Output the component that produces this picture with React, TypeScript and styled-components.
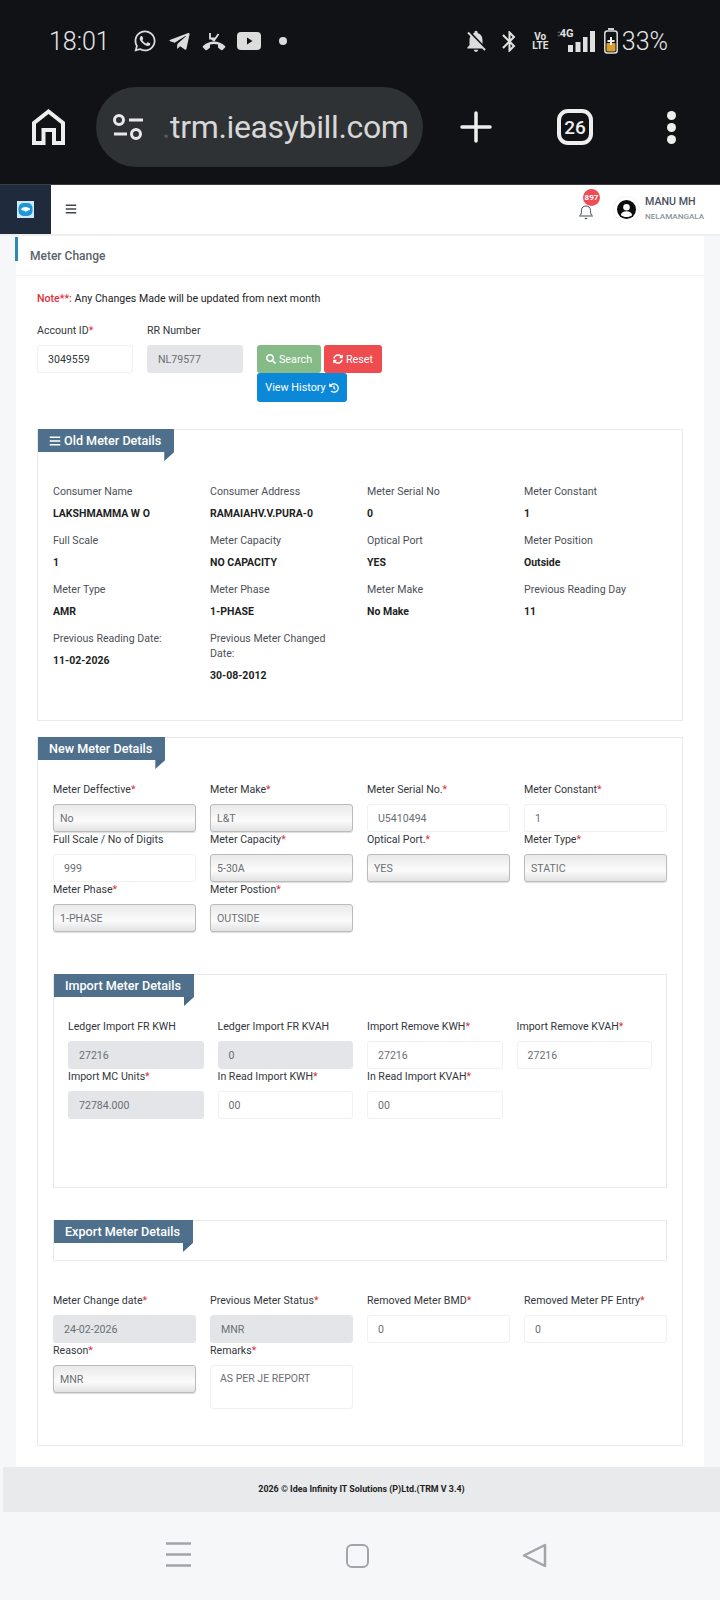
import React from "react";
import styled, { createGlobalStyle } from "styled-components";
import { FaWhatsapp, FaTelegramPlane, FaSearch, FaSyncAlt, FaHistory, FaBars } from "react-icons/fa";
import { MdNotificationsOff, MdBluetooth } from "react-icons/md";

const Global = createGlobalStyle`
  html, body { margin: 0; padding: 0; background: #f6f7f9; }
  * { box-sizing: border-box; }
  body { font-family: Roboto, "Liberation Sans", sans-serif; }
`;

const Page = styled.div`
  width: 720px;
  height: 1600px;
  overflow: hidden;
  background: #f6f7f9;
  display: flex;
  flex-direction: column;
`;

/* phone chrome */
const SystemBar = styled.div`
  height: 185px;
  background: #101215;
  color: #e6e6e6;
  display: flex;
  flex-direction: column;
  border-bottom: 1px solid #3a3d41;
  flex: none;
`;
const StatusRow = styled.div`
  height: 87px;
  padding: 0 52px 5px 49px;
  display: flex;
  align-items: center;
  justify-content: space-between;
`;
const StatusGroup = styled.div`
  display: flex;
  align-items: center;
`;
const Clock = styled.span`
  font-size: 25px;
  font-weight: 300;
  width: 84px;
`;
const AppIcons = styled.div`
  display: flex;
  align-items: center;
  gap: 11px;
  color: #dcdcdc;
`;
const Dot = styled.span`
  width: 8px;
  height: 8px;
  border-radius: 50%;
  background: #dcdcdc;
  margin-left: 7px;
`;
const BellOff = styled(MdNotificationsOff)`
  margin-right: 8px;
  color: #dcdcdc;
`;
const Bluetooth = styled(MdBluetooth)`
  margin-right: -3px;
  color: #e0e0e0;
`;
const VoLte = styled.span`
  font-size: 10px;
  line-height: 9px;
  font-weight: 700;
  text-align: center;
  width: 17px;
  color: #e0e0e0;
  margin: 0 8px 0 13px;
`;
const Signal = styled.div`
  position: relative;
  width: 39px;
  height: 22px;
  margin-right: 8px;
`;
const FourG = styled.span`
  position: absolute;
  left: 3px;
  top: -3px;
  font-size: 11px;
  font-weight: 700;
  color: #e0e0e0;
`;
const Percent = styled.span`
  font-size: 25px;
  font-weight: 300;
  margin-left: 4px;
`;
const BrowserRow = styled.div`
  display: flex;
  align-items: center;
  height: 80px;
  padding-left: 32px;
`;
const UrlPill = styled.div`
  width: 327px;
  height: 80px;
  margin-left: 31px;
  border-radius: 40px;
  background: #2f3235;
  display: flex;
  align-items: center;
  padding-left: 17px;
  flex: none;
`;
const UrlText = styled.span`
  margin-left: 19px;
  font-size: 32px;
  letter-spacing: -0.35px;
  color: #d8d8d8;
  white-space: nowrap;
`;
const FadeChar = styled.span`
  color: #55585b;
`;
const PlusWrap = styled.div`
  margin-left: 37px;
  display: flex;
`;
const TabCount = styled.div`
  width: 36px;
  height: 36px;
  border: 4px solid #eee;
  border-radius: 11px;
  margin-left: 65px;
  display: flex;
  align-items: center;
  justify-content: center;
  font-size: 19px;
  font-weight: 500;
  color: #eee;
`;
const MenuDots = styled.div`
  margin-left: 74px;
  display: flex;
  flex-direction: column;
  gap: 3px;
`;
const MenuDot = styled.span`
  width: 9px;
  height: 9px;
  border-radius: 50%;
  background: #eee;
`;

/* app header */
const AppHeader = styled.header`
  height: 51px;
  background: #fff;
  display: flex;
  align-items: stretch;
  border-bottom: 2px solid #eceef0;
  flex: none;
`;
const LogoBlock = styled.div`
  width: 51px;
  background: #1f2a3c;
  display: flex;
  align-items: center;
  justify-content: center;
`;
const MenuToggle = styled.div`
  margin-left: 14px;
  display: flex;
  align-items: center;
  padding-bottom: 2px;
  color: #3f4650;
  font-size: 12px;
`;
const HeaderRight = styled.div`
  margin-left: auto;
  display: flex;
  align-items: center;
  padding-right: 16px;
`;
const BellWrap = styled.div`
  position: relative;
  width: 16px;
  height: 17px;
  margin: 3px 20px 0 0;
  color: #444b55;
`;
const Badge = styled.span`
  position: absolute;
  left: 5px;
  top: -14px;
  width: 17px;
  height: 17px;
  border-radius: 50%;
  background: #ef4d55;
  color: #fff;
  font-size: 8px;
  font-weight: 700;
  display: flex;
  align-items: center;
  justify-content: center;
`;
const Avatar = styled.div`
  width: 25px;
  height: 25px;
  border-radius: 50%;
  background: #fff;
  box-shadow: 0 0 2px #ddd;
  display: flex;
  align-items: center;
  justify-content: center;
  margin-right: 6px;
`;
const UserBlock = styled.div`
  display: flex;
  flex-direction: column;
  gap: 2px;
  width: 59px;
  margin-bottom: 4px;
`;
const UserName = styled.span`
  font-size: 10.7px;
  line-height: 14px;
  font-weight: 500;
  color: #4a515c;
  white-space: nowrap;
`;
const UserPlace = styled.span`
  font-size: 8.1px;
  line-height: 10px;
  font-weight: 500;
  color: #8c94a0;
  white-space: nowrap;
`;

/* page card */
const Card = styled.main`
  margin: 0 16px;
  background: #fff;
  flex: none;
`;
const TitleBar = styled.div`
  position: relative;
  height: 40px;
  padding: 12px 0 0 14px;
  border-bottom: 1px solid #f1f2f4;
  font-size: 12px;
  line-height: 16px;
  font-weight: 500;
  color: #5a626c;
  &::before {
    content: "";
    position: absolute;
    left: -1px;
    top: 1px;
    width: 3px;
    height: 24px;
    background: #2d8ab5;
  }
`;
const CardBody = styled.div`
  padding: 16px 21px 21px;
`;
const Note = styled.p`
  margin: 0 0 18px;
  font-size: 10.6px;
  line-height: 14px;
  color: #222;
`;
const NoteMark = styled.span`
  color: #e0313b;
  font-weight: 500;
`;
const SearchRow = styled.div`
  display: flex;
  align-items: flex-start;
  margin-bottom: 27px;
`;
const SearchField = styled.div`
  width: 96px;
  margin-right: 14px;
`;
const ButtonArea = styled.div`
  margin-top: 21px;
  width: 135px;
  display: flex;
  flex-wrap: wrap;
  column-gap: 3px;
`;
const Button = styled.div<{ $bg: string; $w: number }>`
  width: ${(p) => p.$w}px;
  height: ${(p) => (p.$w === 90 ? 29 : 28)}px;
  background: ${(p) => p.$bg};
  color: #fff;
  border-radius: 3px;
  font-size: 10.8px;
  font-weight: 400;
  display: flex;
  align-items: center;
  justify-content: center;
  gap: 3px;
  white-space: nowrap;
`;

const Panel = styled.section<{ $pad: string; $mb?: number; $mt?: number }>`
  border: 1px solid #e9eaec;
  background: #fff;
  padding: ${(p) => p.$pad};
  margin-top: ${(p) => p.$mt ?? 0}px;
  margin-bottom: ${(p) => p.$mb ?? 0}px;
`;
const Ribbon = styled.div`
  position: relative;
  display: inline-flex;
  align-items: center;
  gap: 3px;
  height: 23px;
  margin: -1px 0 0 0;
  padding: 0 13px 0 11px;
  background: #4f708c;
  color: #fff;
  font-size: 12.6px;
  font-weight: 500;
  white-space: nowrap;
  vertical-align: top;
  &::after {
    content: "";
    position: absolute;
    right: 0;
    top: 100%;
    width: 10px;
    height: 9px;
    background: #466a88;
    clip-path: polygon(0 0, 100% 0, 0 100%);
  }
`;
const RibbonRow = styled.div<{ $inset: number }>`
  margin-left: -${(p) => p.$inset}px;
  height: 22px;
`;
const DetailGrid = styled.div`
  margin-top: 32px;
  display: grid;
  grid-template-columns: repeat(4, 143px);
  column-gap: 14px;
`;
const Detail = styled.div`
  padding: 0 12px 12px 0;
`;
const DetailLabel = styled.div`
  font-size: 10.6px;
  line-height: 15px;
  color: #4c5057;
  margin-bottom: 8px;
`;
const DetailValue = styled.div`
  font-size: 10.5px;
  line-height: 14px;
  font-weight: 700;
  color: #1d1f22;
`;
const FieldGrid = styled.div<{ $col: number; $top?: number }>`
  margin-top: ${(p) => p.$top ?? 0}px;
  display: grid;
  grid-template-columns: repeat(4, ${(p) => p.$col}px);
  column-gap: 14px;
  row-gap: 1px;
  align-items: start;
`;
const Field = styled.div``;
const FieldLabel = styled.div`
  font-size: 10.6px;
  line-height: 14px;
  color: #33373d;
  margin-bottom: 7px;
  white-space: nowrap;
`;
const Req = styled.span`
  color: #e0313b;
`;
const controlBg = {
  input: "background: #fff; border: 1px solid #eef0f2; padding-left: 10px;",
  disabled: "background: #e3e5e8; border: 1px solid #e3e5e8; padding-left: 10px;",
  select:
    "background: linear-gradient(#e9e9e9, #f7f7f7 45%, #fbfbfb 60%, #e2e2e2); border: 1px solid #b9bcbf; padding-left: 6px; box-shadow: 0 1px 1px #ddd;",
};
type Kind = keyof typeof controlBg;
const Control = styled.div<{ $kind: Kind; $strong?: boolean }>`
  height: 28px;
  border-radius: 3px;
  display: flex;
  align-items: center;
  font-size: 10.6px;
  color: ${(p) => (p.$strong ? "#33373d" : "#6b6f75")};
  ${(p) => controlBg[p.$kind]}
`;
const TextArea = styled.div`
  height: 44px;
  border: 1px solid #eef0f2;
  border-radius: 3px;
  padding: 6px 0 0 9px;
  font-size: 10.5px;
  line-height: 14px;
  color: #6b6f75;
`;

/* footer */
const Footer = styled.footer`
  height: 45px;
  margin-left: 3px;
  background: #e9eaeb;
  display: flex;
  align-items: center;
  justify-content: center;
  padding-bottom: 1px;
  font-size: 8.9px;
  font-weight: 700;
  color: #222;
  flex: none;
`;
const NavBar = styled.nav`
  display: flex;
  align-items: flex-start;
  padding: 30px 0 0 166px;
  color: #a2a4a8;
`;
const NavSquare = styled.div`
  width: 23px;
  height: 24px;
  margin: 2px 0 0 155px;
  border: 2.5px solid #a2a4a8;
  border-radius: 6px;
`;
const NavBack = styled.div`
  margin: 1px 0 0 153px;
  display: flex;
`;

/* drawings */
const HomeIcon = () => (
  <svg width="33" height="36" viewBox="0 0 33 36" fill="none" stroke="#eee" strokeWidth="4">
    <path d="M2 34V14L16.5 2.5 31 14v20h-9V21H11.5v13H2z" strokeLinejoin="miter" />
  </svg>
);
const TuneIcon = () => (
  <svg width="30" height="26" viewBox="0 0 30 26" fill="none" stroke="#e8e8e8" strokeWidth="3">
    <circle cx="6" cy="6" r="4.5" />
    <path d="M16 6h14M1 20h13" />
    <circle cx="23" cy="20" r="4.5" />
  </svg>
);
const PlusIcon = () => (
  <svg width="32" height="32" viewBox="0 0 32 32" stroke="#eee" strokeWidth="3.5" strokeLinecap="round">
    <path d="M16 2v28M2 16h28" />
  </svg>
);
const MissedCall = () => (
  <svg width="24" height="19" viewBox="0 0 24 19" fill="#dcdcdc">
    <path d="M12 9.5c-4 0-8 1.600-11 4.500-.5.5-.5 1 0 1.500l2.500 2.500c.4.4 1 .4 1.400.1l2.600-2c.3-.2.5-.5.5-.9v-2.600c1.300-.4 2.700-.6 4-.6s2.700.2 4 .6v2.600c0 .4.2.7.5.9l2.600 2c.4.3 1 .3 1.400-.1l2.500-2.500c.5-.5.5-1 0-1.500-3-2.900-7-4.500-11-4.500z" />
    <path d="M8 1v5.500h5.500M8.500 6l3.500 2.500L16.500 2" fill="none" stroke="#dcdcdc" strokeWidth="1.800" />
  </svg>
);
const YoutubeIcon = () => (
  <svg width="24" height="18" viewBox="0 0 24 18">
    <rect width="24" height="18" rx="4" fill="#dcdcdc" />
    <path d="M10 5.500l5.500 3.500-5.500 3.500z" fill="#101215" />
  </svg>
);
const SignalBars = () => (
  <svg width="39" height="22" viewBox="0 0 39 22" fill="#e0e0e0">
    <path d="M0 3l2-2 2 2zM0 5l2 2 2-2z" fill="#555" />
    <rect x="11" y="15" width="5" height="7" />
    <rect x="18.500" y="12" width="5" height="10" />
    <rect x="26" y="7" width="4.500" height="15" />
    <rect x="33" y="1" width="5" height="21" />
  </svg>
);
const Battery = () => (
  <svg width="14" height="26" viewBox="0 0 14 26">
    <rect x="4" y="0" width="6" height="2" fill="#ccc" />
    <rect x="0.800" y="3" width="12.400" height="22" rx="2.500" fill="none" stroke="#ddd" strokeWidth="1.500" />
    <rect x="2.500" y="15" width="9" height="8.500" rx="1" fill="#d9a02b" />
    <path d="M7 9v8M3.500 13h7" stroke="#eee" strokeWidth="2" />
  </svg>
);
const LogoIcon = () => (
  <svg width="17" height="17" viewBox="0 0 17 17">
    <rect width="17" height="17" fill="#cfe9f6" />
    <rect x="1.500" y="2" width="14" height="13" rx="5" fill="#1f96d6" />
    <path d="M4 8.500c1-2.500 5-3 6.500-2 1.500 0 3 1 2.500 2.500-1 .5-2 0-3 1-1 1.500-2.500 0-3-.5-1 0-2 0-3-1z" fill="#fff" />
  </svg>
);
const BellIcon = () => (
  <svg width="16" height="17" viewBox="0 0 16 17" fill="none" stroke="#444b55" strokeWidth="1">
    <path d="M1.500 13c1.500-1 2-2.500 2-5.500 0-3 2-4.500 4.500-4.500s4.500 1.500 4.500 4.500c0 3 .5 4.500 2 5.500z" />
    <path d="M6.800 15.500h2.400" strokeWidth="1.300" />
  </svg>
);
const AvatarIcon = () => (
  <svg width="19" height="19" viewBox="0 0 19 19">
    <circle cx="9.500" cy="9.500" r="9.500" fill="#0d0d0d" />
    <circle cx="9.500" cy="7.300" r="3.300" fill="#fff" />
    <path d="M3.800 15c1-2.700 3-3.700 5.700-3.700s4.700 1 5.700 3.700c-1.500 1.400-3.500 2.100-5.700 2.100S5.300 16.400 3.800 15z" fill="#fff" />
  </svg>
);
const NavMenu = () => (
  <svg width="25" height="25" viewBox="0 0 25 25" stroke="#a2a4a8" strokeWidth="2.500">
    <path d="M0 1.500h25M0 12.500h25M0 23.500h25" />
  </svg>
);
const NavTriangle = () => (
  <svg width="25" height="25" viewBox="0 0 25 25" fill="none" stroke="#a2a4a8" strokeWidth="2.500" strokeLinejoin="round">
    <path d="M23 2v21L2 12.500z" />
  </svg>
);

type Item = { label: string; value: string };
const oldDetails: Item[] = [
  { label: "Consumer Name", value: "LAKSHMAMMA W O" },
  { label: "Consumer Address", value: "RAMAIAHV.V.PURA-0" },
  { label: "Meter Serial No", value: "0" },
  { label: "Meter Constant", value: "1" },
  { label: "Full Scale", value: "1" },
  { label: "Meter Capacity", value: "NO CAPACITY" },
  { label: "Optical Port", value: "YES" },
  { label: "Meter Position", value: "Outside" },
  { label: "Meter Type", value: "AMR" },
  { label: "Meter Phase", value: "1-PHASE" },
  { label: "Meter Make", value: "No Make" },
  { label: "Previous Reading Day", value: "11" },
  { label: "Previous Reading Date:", value: "11-02-2026" },
  { label: "Previous Meter Changed Date:", value: "30-08-2012" },
];

type F = { label: string; value: string; kind: Kind; req?: boolean };
const newMeter: F[] = [
  { label: "Meter Deffective", value: "No", kind: "select", req: true },
  { label: "Meter Make", value: "L&T", kind: "select", req: true },
  { label: "Meter Serial No.", value: "U5410494", kind: "input", req: true },
  { label: "Meter Constant", value: "1", kind: "input", req: true },
  { label: "Full Scale / No of Digits", value: "999", kind: "input" },
  { label: "Meter Capacity", value: "5-30A", kind: "select", req: true },
  { label: "Optical Port.", value: "YES", kind: "select", req: true },
  { label: "Meter Type", value: "STATIC", kind: "select", req: true },
  { label: "Meter Phase", value: "1-PHASE", kind: "select", req: true },
  { label: "Meter Postion", value: "OUTSIDE", kind: "select", req: true },
];
const importMeter: F[] = [
  { label: "Ledger Import FR KWH", value: "27216", kind: "disabled" },
  { label: "Ledger Import FR KVAH", value: "0", kind: "disabled" },
  { label: "Import Remove KWH", value: "27216", kind: "input", req: true },
  { label: "Import Remove KVAH", value: "27216", kind: "input", req: true },
  { label: "Import MC Units", value: "72784.000", kind: "disabled", req: true },
  { label: "In Read Import KWH", value: "00", kind: "input", req: true },
  { label: "In Read Import KVAH", value: "00", kind: "input", req: true },
];
const closing: F[] = [
  { label: "Meter Change date", value: "24-02-2026", kind: "disabled", req: true },
  { label: "Previous Meter Status", value: "MNR", kind: "disabled", req: true },
  { label: "Removed Meter BMD", value: "0", kind: "input", req: true },
  { label: "Removed Meter PF Entry", value: "0", kind: "input", req: true },
  { label: "Reason", value: "MNR", kind: "select", req: true },
];

const FormField = ({ f }: { f: F }) => (
  <Field>
    <FieldLabel>
      {f.label}
      {f.req && <Req>*</Req>}
    </FieldLabel>
    <Control $kind={f.kind}>{f.value}</Control>
  </Field>
);

export default function App() {
  return (
    <Page>
      <Global />
      <SystemBar>
        <StatusRow>
          <StatusGroup>
            <Clock>18:01</Clock>
            <AppIcons>
              <FaWhatsapp size={24} />
              <FaTelegramPlane size={23} />
              <MissedCall />
              <YoutubeIcon />
              <Dot />
            </AppIcons>
          </StatusGroup>
          <StatusGroup>
            <BellOff size={26} />
            <Bluetooth size={25} />
            <VoLte>
              Vo
              <br />
              LTE
            </VoLte>
            <Signal>
              <SignalBars />
              <FourG>4G</FourG>
            </Signal>
            <Battery />
            <Percent>33%</Percent>
          </StatusGroup>
        </StatusRow>
        <BrowserRow>
          <HomeIcon />
          <UrlPill>
            <TuneIcon />
            <UrlText>
              <FadeChar>.</FadeChar>trm.ieasybill.com
            </UrlText>
          </UrlPill>
          <PlusWrap>
            <PlusIcon />
          </PlusWrap>
          <TabCount>26</TabCount>
          <MenuDots>
            <MenuDot />
            <MenuDot />
            <MenuDot />
          </MenuDots>
        </BrowserRow>
      </SystemBar>

      <AppHeader>
        <LogoBlock>
          <LogoIcon />
        </LogoBlock>
        <MenuToggle>
          <FaBars />
        </MenuToggle>
        <HeaderRight>
          <BellWrap>
            <BellIcon />
            <Badge>897</Badge>
          </BellWrap>
          <Avatar>
            <AvatarIcon />
          </Avatar>
          <UserBlock>
            <UserName>MANU MH</UserName>
            <UserPlace>NELAMANGALA</UserPlace>
          </UserBlock>
        </HeaderRight>
      </AppHeader>

      <Card>
        <TitleBar>Meter Change</TitleBar>
        <CardBody>
          <Note>
            <NoteMark>Note**:</NoteMark> Any Changes Made will be updated from next month
          </Note>
          <SearchRow>
            <SearchField>
              <FieldLabel>
                Account ID<Req>*</Req>
              </FieldLabel>
              <Control $kind="input" $strong>
                3049559
              </Control>
            </SearchField>
            <SearchField>
              <FieldLabel>RR Number</FieldLabel>
              <Control $kind="disabled">NL79577</Control>
            </SearchField>
            <ButtonArea>
              <Button $bg="#86bb88" $w={64}>
                <FaSearch size={10} /> Search
              </Button>
              <Button $bg="#ef4c50" $w={58}>
                <FaSyncAlt size={10} /> Reset
              </Button>
              <Button $bg="#0c88d8" $w={90}>
                View History <FaHistory size={10} />
              </Button>
            </ButtonArea>
          </SearchRow>

          <Panel $pad="0 15px 25px" $mb={16}>
            <RibbonRow $inset={15}>
              <Ribbon>
                <FaBars size={12} /> Old Meter Details
              </Ribbon>
            </RibbonRow>
            <DetailGrid>
              {oldDetails.map((d) => (
                <Detail key={d.label}>
                  <DetailLabel>{d.label}</DetailLabel>
                  <DetailValue>{d.value}</DetailValue>
                </Detail>
              ))}
            </DetailGrid>
          </Panel>

          <Panel $pad="0 15px 36px">
            <RibbonRow $inset={15}>
              <Ribbon>New Meter Details</Ribbon>
            </RibbonRow>
            <FieldGrid $col={143} $top={23}>
              {newMeter.map((f) => (
                <FormField key={f.label} f={f} />
              ))}
            </FieldGrid>

            <Panel $pad="0 14px 68px" $mt={42} $mb={32}>
              <RibbonRow $inset={14}>
                <Ribbon>Import Meter Details</Ribbon>
              </RibbonRow>
              <FieldGrid $col={135.5} $top={23}>
                {importMeter.map((f) => (
                  <FormField key={f.label} f={f} />
                ))}
              </FieldGrid>
            </Panel>

            <Panel $pad="0 14px 17px" $mb={33}>
              <RibbonRow $inset={14}>
                <Ribbon>Export Meter Details</Ribbon>
              </RibbonRow>
            </Panel>

            <FieldGrid $col={143}>
              {closing.map((f) => (
                <FormField key={f.label} f={f} />
              ))}
              <Field>
                <FieldLabel>
                  Remarks<Req>*</Req>
                </FieldLabel>
                <TextArea>AS PER JE REPORT</TextArea>
              </Field>
            </FieldGrid>
          </Panel>
        </CardBody>
      </Card>

      <Footer>2026 © Idea Infinity IT Solutions (P)Ltd.(TRM V 3.4)</Footer>
      <NavBar>
        <NavMenu />
        <NavSquare />
        <NavBack>
          <NavTriangle />
        </NavBack>
      </NavBar>
    </Page>
  );
}
